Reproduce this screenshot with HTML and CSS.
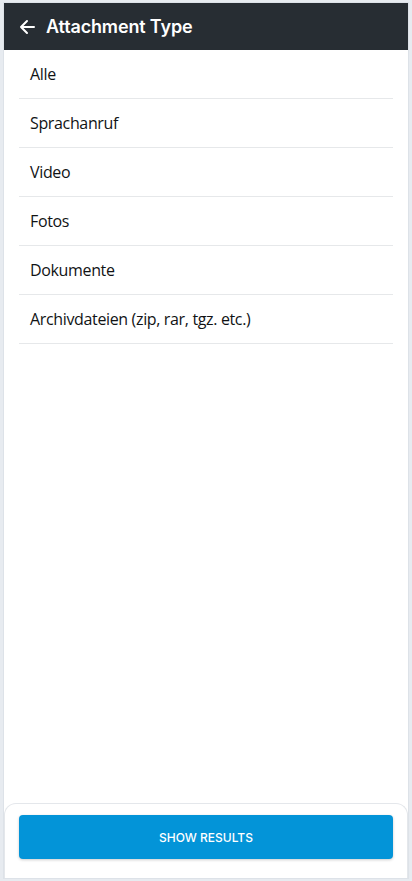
FILE: index.html
```html
<!DOCTYPE html>
<html>
<head>
<meta charset="utf-8">
<link rel="stylesheet" href="styles.css">
</head>
<body>
<div class="panel">
  <header class="topbar">
    <svg class="back" width="16" height="16" viewBox="0 0 16 16"><path d="M15 8H2M8 2L2 8l6 6" fill="none" stroke="#fff" stroke-width="2" stroke-linecap="round" stroke-linejoin="round"/></svg>
    <h1 class="title">Attachment Type</h1>
  </header>
  <ul class="list">
    <li class="item">Alle</li>
    <li class="item">Sprachanruf</li>
    <li class="item">Video</li>
    <li class="item">Fotos</li>
    <li class="item">Dokumente</li>
    <li class="item">Archivdateien (zip, rar, tgz. etc.)</li>
  </ul>
  <footer class="footer">
    <button class="btn">SHOW RESULTS</button>
  </footer>
</div>
</body>
</html>
```
FILE: styles.css
```css
html, body { margin: 0; padding: 0; }
body {
  background: #e7ebf0;
  width: 412px;
  height: 881px;
  padding: 3px 4px 3px 4px;
  box-sizing: border-box;
}
.panel {
  background: #fff;
  height: 875px;
  display: flex;
  flex-direction: column;
  box-shadow: 0 0 0 1px #dde2e8;
}
.topbar {
  background: #272d33;
  height: 47px;
  display: flex;
  align-items: center;
  padding-left: 15px;
  flex-shrink: 0;
}
.back { display: block; }
.title {
  margin: 0 0 0 11px;
  color: #fff;
  font-family: Inter, "Noto Sans", sans-serif;
  font-weight: 600;
  font-size: 18px;
  letter-spacing: -0.15px;
}
.list {
  list-style: none;
  margin: 0 15px;
  padding: 0;
  flex: 1;
}
.item {
  height: 48px;
  border-bottom: 1px solid #e6e8ea;
  display: flex;
  align-items: center;
  padding-left: 11px;
  font-family: "Open Sans", "Noto Sans", sans-serif;
  font-size: 16px;
  letter-spacing: -0.35px;
  color: #111315;
}
.footer {
  border: 1px solid #e4e7eb;
  border-bottom: none;
  border-radius: 12px 12px 0 0;
  padding: 11px 14px 19px;
  flex-shrink: 0;
}
.btn {
  display: block;
  width: 100%;
  height: 44px;
  border: none;
  border-radius: 4px;
  background: #0394d8;
  color: #fff;
  font-family: Inter, sans-serif;
  font-weight: 500;
  font-size: 12px;
  box-shadow: 0 1px 3px rgba(0,0,0,0.2);
}
```
